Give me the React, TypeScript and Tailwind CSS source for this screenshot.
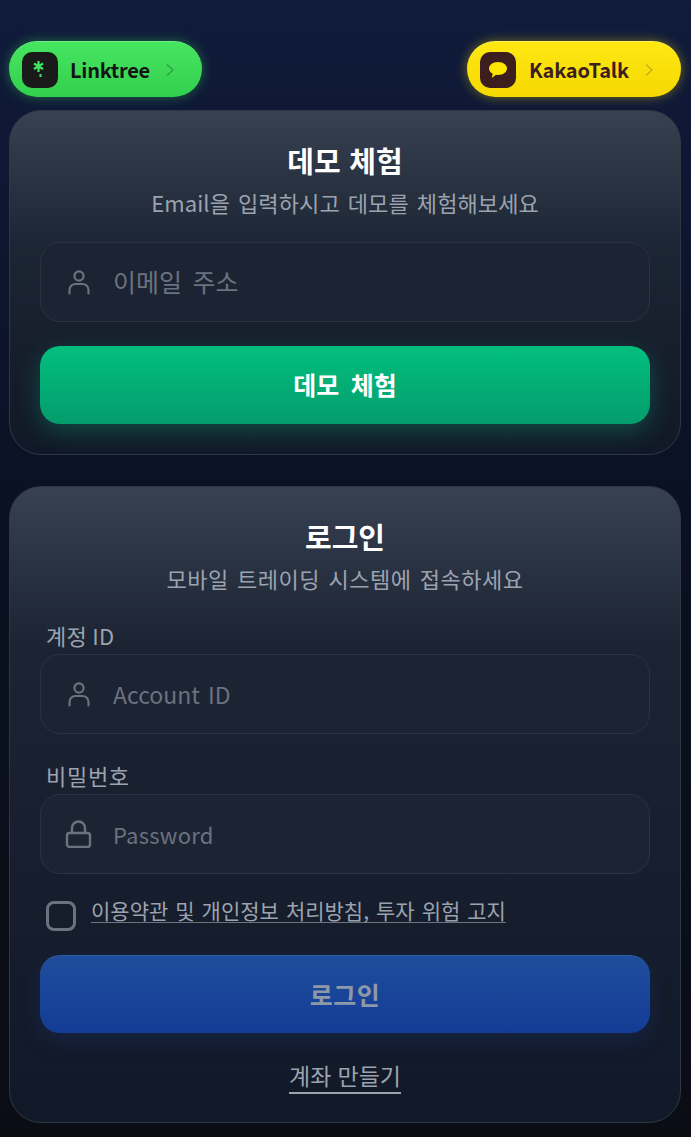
import React from "react";

function UserIcon() {
  return (
    <svg width="24" height="26" viewBox="0 0 24 26" fill="none" stroke="#6b7280" strokeWidth="2.2" strokeLinecap="round" strokeLinejoin="round" className="shrink-0">
      <circle cx="12" cy="7" r="4.6" />
      <path d="M2.500 24.500v-3.500a6 6 0 0 1 6-6h7a6 6 0 0 1 6 6v3.500" />
    </svg>
  );
}

function LockIcon() {
  return (
    <svg width="28" height="28" viewBox="0 0 28 28" fill="none" stroke="#6b7280" strokeWidth="2.400" strokeLinecap="round" strokeLinejoin="round" className="shrink-0">
      <rect x="2" y="13" width="23" height="14" rx="2.500" />
      <path d="M7 13V8a6.500 6.500 0 0 1 13 0v5" />
    </svg>
  );
}

function Chevron({ color }: { color: string }) {
  return (
    <svg width="10" height="14" viewBox="0 0 10 14" fill="none" stroke={color} strokeWidth="1.200" className="shrink-0">
      <path d="M2 1.500 L8 7 L2 12.500" />
    </svg>
  );
}

function Field({ icon, children }: { icon: React.ReactNode; children: React.ReactNode }) {
  return (
    <div className="flex h-20 items-center rounded-[20px] border border-[#2a3342] bg-[#1c2433]">
      <div className="flex w-[72px] justify-center pl-[4px]">{icon}</div>
      {children}
    </div>
  );
}

export default function App() {
  return (
    <div
      className="flex h-[1137px] w-[691px] flex-col overflow-hidden bg-gradient-to-b from-[#101b3c] via-[#0a1020] to-[#0a0d14] pr-[10px] pl-[9px] pt-[41px]"
      style={{ fontFamily: '"Noto Sans CJK KR", "Noto Sans", sans-serif' }}
    >
      <div className="flex justify-between">
        <div className="flex h-14 w-[193px] items-center rounded-[28px] border-t border-[#6bee80] bg-gradient-to-b from-[#46e660] to-[#33cf4e] pl-[13px] shadow-[0_0_12px_rgba(57,224,90,0.4)]">
          <div className="flex h-9 w-9 items-center justify-center rounded-[10px] bg-[#1a1a1a]">
            <svg width="16" height="24" viewBox="0 0 16 24" fill="none" stroke="#43e660">
              <path strokeWidth="2.200" d="M6.500 3v11M2 5.500l9 5.500M11 5.500l-9 5.500" />
              <path strokeWidth="2" d="M8.500 16v3" />
            </svg>
          </div>
          <span className="ml-3 text-[20px] font-semibold tracking-[-0.25px] text-[#141414]">Linktree</span>
          <span className="ml-[15px]"><Chevron color="#2f9a45" /></span>
        </div>
        <div className="flex h-14 w-[214px] items-center rounded-[28px] border-t border-[#ffee55] bg-gradient-to-b from-[#ffe812] to-[#f5d800] pl-[13px] shadow-[0_0_12px_rgba(254,229,0,0.4)]">
          <div className="flex h-9 w-9 items-center justify-center rounded-[10px] bg-[#3c1e1e]">
            <svg width="22" height="22" viewBox="0 0 22 22" fill="#fee500">
              <path d="M11 3c5 0 9 2.900 9 6.500S16 16 11 16c-.7 0-1.400-.1-2-.2L4.800 19l.9-4.300C3.400 13.500 2 11.700 2 9.500 2 5.900 6 3 11 3z" />
            </svg>
          </div>
          <span className="ml-[13px] text-[20px] font-semibold tracking-[-0.2px] text-[#3c1e1e]">KakaoTalk</span>
          <span className="ml-[15px]"><Chevron color="#c4aa10" /></span>
        </div>
      </div>

      <section className="mt-[13px] h-[345px] rounded-[32px] border border-[#2f3744] bg-gradient-to-b from-[#374151] via-[#1c2533] via-40% to-[#111827] px-[30px] pt-[28px]">
        <h2 className="text-center text-[29px] leading-[42px] font-bold [word-spacing:2px] text-white">데모 체험</h2>
        <p className="mt-[5px] text-center text-[22px] leading-[32px] tracking-[0.1px] [word-spacing:3px] text-[#9ca3af]">Email을 입력하시고 데모를 체험해보세요</p>
        <div className="mt-[24px]">
          <Field icon={<UserIcon />}>
            <span className="text-[25px] [word-spacing:5px] text-[#6b7280]">이메일 주소</span>
          </Field>
        </div>
        <button className="mt-6 block h-[78px] w-full rounded-[20px] bg-gradient-to-b from-[#02bf7e] to-[#049d6c] text-[25px] font-bold [word-spacing:6px] text-white shadow-[0_8px_24px_rgba(16,185,129,0.3)]">
          데모 체험
        </button>
      </section>

      <section className="mt-[31px] h-[637px] rounded-[32px] border border-[#2f3744] bg-gradient-to-b from-[#374151] via-[#1c2433] via-25% to-[#111827] px-[30px] pt-[28px]">
        <h2 className="text-center text-[29px] leading-[42px] font-bold text-white">로그인</h2>
        <p className="mt-[5px] text-center text-[22px] leading-[32px] tracking-[0.5px] [word-spacing:3px] text-[#9ca3af]">모바일 트레이딩 시스템에 접속하세요</p>
        <label className="mt-[27px] mb-[4px] block pl-[6px] text-[22px] leading-[29px] tracking-[0.3px] text-[#9ca3af]">계정 ID</label>
        <Field icon={<UserIcon />}>
          <span className="text-[23px] [word-spacing:3px] text-[#6b7280]">Account ID</span>
        </Field>
        <label className="mt-[27px] mb-[4px] block pl-[6px] text-[22px] leading-[29px] tracking-[0.7px] text-[#9ca3af]">비밀번호</label>
        <Field icon={<LockIcon />}>
          <span className="text-[22px] tracking-[0.25px] text-[#6b7280]">Password</span>
        </Field>
        <div className="mt-6 flex items-start pl-[6px]">
          <span className="mt-[3px] block h-[30px] w-[30px] rounded-[8px] border-[3px] border-[#6b7280]" />
          <span className="ml-[15px] border-b border-[#6b7280] text-[21px] leading-[24px] [word-spacing:2.300px] text-[#9ca3af]">이용약관 및 개인정보 처리방침, 투자 위험 고지</span>
        </div>
        <button className="mt-[24px] block h-[78px] w-full rounded-[20px] border-t border-[#2f5aa5] bg-gradient-to-b from-[#1f4d9c] to-[#143c96] text-[25px] font-bold tracking-[0.5px] text-[#8e99a8] shadow-[0_8px_24px_rgba(37,99,235,0.15)]">
          로그인
        </button>
        <div className="mt-[26px] flex justify-center">
          <span className="border-b-2 border-[#9ca3af] text-[23px] leading-[33px] [word-spacing:1px] text-[#9ca3af]">계좌 만들기</span>
        </div>
      </section>
    </div>
  );
}
